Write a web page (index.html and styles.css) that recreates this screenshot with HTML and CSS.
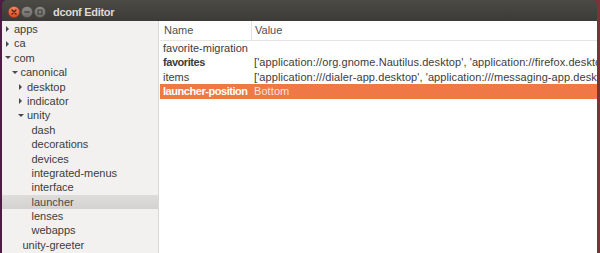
FILE: index.html
```html
<!DOCTYPE html>
<html>
<head>
<meta charset="utf-8">
<link rel="stylesheet" href="styles.css">
</head>
<body>
<div class="window">
  <div class="titlebar">
    <div class="buttons">
      <svg class="btn" width="12" height="12" viewBox="0 0 12 12">
        <defs><linearGradient id="gc" x1="0" y1="0" x2="0" y2="1"><stop offset="0" stop-color="#f58a6a"/><stop offset="1" stop-color="#df4a1c"/></linearGradient></defs>
        <circle cx="6" cy="6" r="5.6" fill="url(#gc)" stroke="#8c3b22" stroke-width="0.6"/>
        <path d="M4 4 L8 8 M8 4 L4 8" stroke="#4a2115" stroke-width="1.3" stroke-linecap="round"/>
      </svg>
      <svg class="btn" width="12" height="12" viewBox="0 0 12 12">
        <defs><linearGradient id="gm" x1="0" y1="0" x2="0" y2="1"><stop offset="0" stop-color="#8e8d88"/><stop offset="1" stop-color="#6c6b67"/></linearGradient></defs>
        <circle cx="6" cy="6" r="5.6" fill="url(#gm)" stroke="#4a4945" stroke-width="0.6"/>
        <path d="M3.5 6 L8.5 6" stroke="#3d3c39" stroke-width="1.3"/>
      </svg>
      <svg class="btn" width="12" height="12" viewBox="0 0 12 12">
        <circle cx="6" cy="6" r="5.6" fill="url(#gm)" stroke="#4a4945" stroke-width="0.6"/>
        <rect x="4" y="4" width="4" height="4" fill="none" stroke="#3d3c39" stroke-width="1"/>
      </svg>
    </div>
    <div class="title">dconf Editor</div>
  </div>
  <div class="main">
    <div class="sidebar">
      <div class="node l0"><span class="arr closed"></span><span>apps</span></div>
      <div class="node l0"><span class="arr closed"></span><span>ca</span></div>
      <div class="node l0"><span class="arr open"></span><span>com</span></div>
      <div class="node l1"><span class="arr open"></span><span>canonical</span></div>
      <div class="node l2"><span class="arr closed"></span><span>desktop</span></div>
      <div class="node l2"><span class="arr closed"></span><span>indicator</span></div>
      <div class="node l2"><span class="arr open"></span><span>unity</span></div>
      <div class="node leaf3"><span>dash</span></div>
      <div class="node leaf3"><span>decorations</span></div>
      <div class="node leaf3"><span>devices</span></div>
      <div class="node leaf3"><span>integrated-menus</span></div>
      <div class="node leaf3"><span>interface</span></div>
      <div class="node leaf3 sel"><span>launcher</span></div>
      <div class="node leaf3"><span>lenses</span></div>
      <div class="node leaf3"><span>webapps</span></div>
      <div class="node leaf2"><span>unity-greeter</span></div>
    </div>
    <div class="content">
      <div class="header">
        <div class="hname">Name</div>
        <div class="hvalue">Value</div>
      </div>
      <div class="row"><div class="cname">favorite-migration</div><div class="cvalue"></div></div>
      <div class="row"><div class="cname bold">favorites</div><div class="cvalue">['application://org.gnome.Nautilus.desktop', 'application://firefox.desktop', 'application://gnome-terminal.desktop']</div></div>
      <div class="row"><div class="cname">items</div><div class="cvalue">['application:///dialer-app.desktop', 'application:///messaging-app.desktop', 'application:///address-book-app.desktop']</div></div>
      <div class="row selrow"><div class="cname bold">launcher-position</div><div class="cvalue">Bottom</div></div>
    </div>
  </div>
</div>
</body>
</html>
```
FILE: styles.css
```css
html, body {
  margin: 0;
  padding: 0;
  width: 600px;
  height: 253px;
  overflow: hidden;
}
body {
  background: linear-gradient(to right, #4d1c42 0, #4d1c42 50%, #6e2b30 50%, #7a3438 100%);
  font-family: "Liberation Sans", Arial, sans-serif;
  font-size: 11px;
  color: #3c3c3c;
}
.window {
  margin: 0 3px 0 2px;
  height: 253px;
  display: flex;
  flex-direction: column;
}
.titlebar {
  height: 21px;
  flex: none;
  display: flex;
  align-items: center;
  background: linear-gradient(#4b4a45, #3c3b37);
  border-radius: 5px 5px 0 0;
  padding-left: 6px;
  padding-top: 2px;
  box-sizing: border-box;
}
.buttons {
  display: flex;
  gap: 1px;
}
.btn {
  display: block;
  width: 12px;
  height: 12px;
}
.title {
  margin-left: 7px;
  color: #dfdbd2;
  font-weight: bold;
  font-size: 11px;
  letter-spacing: -0.3px;
}
.main {
  flex: 1;
  display: flex;
  min-height: 0;
}
.sidebar {
  width: 156px;
  flex: none;
  background: #f2f1f0;
  border-right: 1px solid #d8d7d4;
  padding-top: 1px;
}
.node {
  height: 14.4px;
  line-height: 14.4px;
  display: flex;
  align-items: center;
  white-space: nowrap;
}
.node.l0 { padding-left: 3px; }
.node.l1 { padding-left: 9.5px; }
.node.l2 { padding-left: 16px; }
.node.leaf2 { padding-left: 20.5px; }
.node.leaf3 { padding-left: 29.5px; }
.node.sel {
  background: linear-gradient(#dedddb, #d3d2d0);
  color: #4a4a4a;
}
.arr {
  width: 7px;
  height: 7px;
  flex: none;
  margin-right: 2px;
  position: relative;
}
.arr.closed::before {
  content: "";
  position: absolute;
  left: 1px;
  top: 0.5px;
  border-left: 3.5px solid #4a4a4a;
  border-top: 3px solid transparent;
  border-bottom: 3px solid transparent;
}
.arr.open::before {
  content: "";
  position: absolute;
  left: 0;
  top: 2px;
  border-top: 3.5px solid #4a4a4a;
  border-left: 3px solid transparent;
  border-right: 3px solid transparent;
}
.content {
  flex: 1;
  background: #ffffff;
  min-width: 0;
  overflow: hidden;
  padding-left: 1px;
}
.header {
  height: 19px;
  display: flex;
  border-bottom: 1px solid #e4e4e2;
  color: #505050;
}
.hname {
  width: 92px;
  flex: none;
  padding-left: 4px;
  line-height: 19px;
  border-right: 1px solid #e4e4e2;
  box-sizing: border-box;
}
.hvalue {
  padding-left: 3px;
  line-height: 19px;
}
.row {
  height: 14.4px;
  line-height: 14.4px;
  display: flex;
  white-space: nowrap;
}
.cname {
  width: 92px;
  flex: none;
  padding-left: 3px;
  box-sizing: border-box;
  overflow: hidden;
}
.cvalue {
  padding-left: 2px;
  overflow: hidden;
  white-space: nowrap;
  letter-spacing: 0.08px;
}
.bold {
  font-weight: bold;
  letter-spacing: -0.45px;
}
.selrow {
  background: #f07746;
  color: #ffffff;
}
.selrow .cvalue { color: #fde3d6; }
```
